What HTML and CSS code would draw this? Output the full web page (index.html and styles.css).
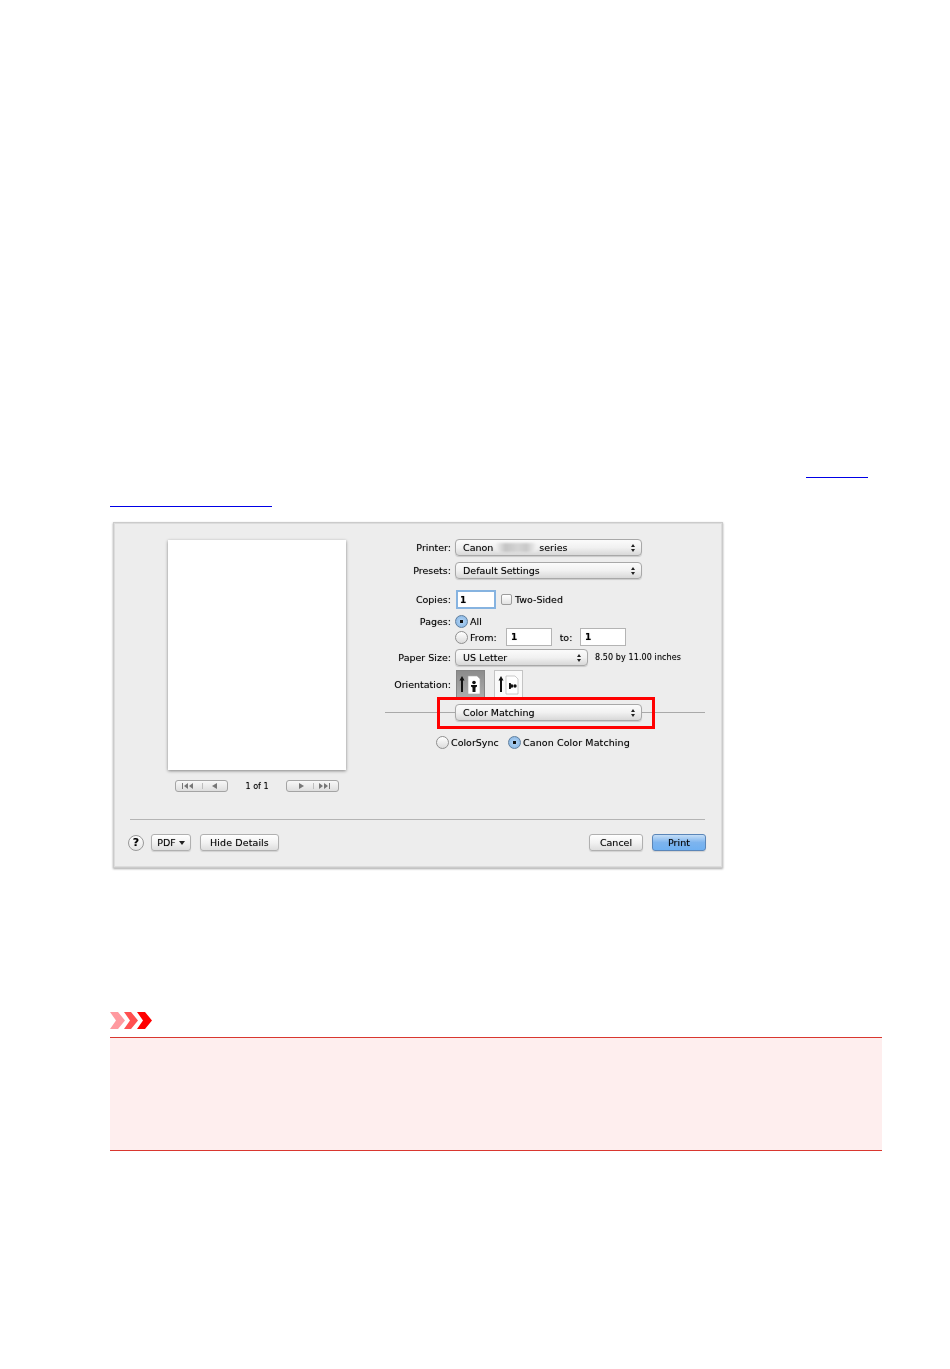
FILE: index.html
```html
<!DOCTYPE html>
<html lang="en">
<head>
<meta charset="utf-8">
<title>Color Matching</title>
<link rel="stylesheet" href="styles.css">
</head>
<body>
<main class="page">
  <div class="link-line link-line-first"></div>
  <div class="link-line link-line-second"></div>

  <section class="dialog">
    <div class="dialog-top">
      <div class="preview-col">
        <div class="sheet"></div>
        <div class="pager">
          <div class="seg-btn">
            <svg width="51" height="10" viewBox="0 0 51 10"><path class="glyph" d="M6 2h1v6H6zM12 2v6L8 5zM17 2v6l-4-3z"/><path class="sep" d="M26.500 2v6"/><path class="glyph" d="M41 2v6l-5-3z"/></svg>
          </div>
          <span class="pager-text">1 of 1</span>
          <div class="seg-btn">
            <svg width="51" height="10" viewBox="0 0 51 10"><path class="glyph" d="M12 2v6l5-3z"/><path class="sep" d="M26.500 2v6"/><path class="glyph" d="M32 2v6l4-3zM37 2v6l4-3zM42 2h1v6h-1z"/></svg>
          </div>
        </div>
      </div>

      <div class="form-col">
        <div class="row row-printer">
          <span class="label">Printer:</span>
          <div class="popup popup-wide">
            <span>Canon</span><span class="smudge"></span><span>series</span>
            <svg class="stepper" width="6" height="10" viewBox="0 0 6 10"><path d="M3 1l2 3H1zM3 9L1 6h4z"/></svg>
          </div>
        </div>
        <div class="row row-presets">
          <span class="label">Presets:</span>
          <div class="popup popup-wide">
            <span>Default Settings</span>
            <svg class="stepper" width="6" height="10" viewBox="0 0 6 10"><path d="M3 1l2 3H1zM3 9L1 6h4z"/></svg>
          </div>
        </div>
        <div class="row row-copies">
          <span class="label">Copies:</span>
          <div class="field field-focus">1</div>
          <span class="check"></span>
          <span>Two-Sided</span>
        </div>
        <div class="row row-pages">
          <span class="label">Pages:</span>
          <span class="radio radio-on"></span>
          <span>All</span>
        </div>
        <div class="row row-from">
          <span class="label"></span>
          <span class="radio"></span>
          <span class="from-label">From:</span>
          <div class="field field-range">1</div>
          <span class="to-label">to:</span>
          <div class="field field-range">1</div>
        </div>
        <div class="row row-paper">
          <span class="label">Paper Size:</span>
          <div class="popup popup-paper">
            <span>US Letter</span>
            <svg class="stepper" width="6" height="10" viewBox="0 0 6 10"><path d="M3 1l2 3H1zM3 9L1 6h4z"/></svg>
          </div>
          <span class="paper-note">8.50 by 11.00 inches</span>
        </div>
        <div class="row row-orient">
          <span class="label">Orientation:</span>
          <div class="orient orient-on">
            <svg width="27" height="27" viewBox="0 0 27 27"><path class="ink" d="M5 5l2.500 4.500H6V21H4V9.500H2.500z"/><path class="page-shape" d="M11 5h9l3 3v15H11z"/><circle class="ink" cx="17" cy="11.500" r="1.800"/><path class="ink" d="M14 14h6v1.500l-1.500 1V21h-3v-4.500l-1.500-1z"/></svg>
          </div>
          <div class="orient">
            <svg width="27" height="27" viewBox="0 0 27 27"><path class="ink" d="M6 5l2.500 4.500H7V21H5V9.500H3.500z"/><path class="page-shape" d="M11 5h9l3 3v15H11z"/><circle class="ink" cx="20" cy="15" r="1.700"/><path class="ink" d="M14 12h1.500l1 1.500H18v3h-1.500l-1 1.500H14z"/></svg>
          </div>
        </div>
        <div class="row row-pane">
          <div class="pane-line"></div>
          <div class="popup popup-wide popup-pane">
            <span>Color Matching</span>
            <svg class="stepper" width="6" height="10" viewBox="0 0 6 10"><path d="M3 1l2 3H1zM3 9L1 6h4z"/></svg>
          </div>
          <div class="highlight"></div>
        </div>
        <div class="row row-match">
          <span class="radio"></span>
          <span class="sync-label">ColorSync</span>
          <span class="radio radio-on"></span>
          <span class="match-label">Canon Color Matching</span>
        </div>
      </div>
    </div>

    <div class="dialog-rule"></div>

    <div class="footer">
      <span class="help">?</span>
      <div class="btn btn-pdf">PDF <span class="caret"></span></div>
      <div class="btn btn-details">Hide Details</div>
      <div class="btn btn-cancel">Cancel</div>
      <div class="btn btn-print">Print</div>
    </div>
  </section>

  <svg class="alert-icon" width="42" height="17" viewBox="0 0 42 17">
    <path class="chev-1" d="M0 0h8l7 8.500L8 17H0l6-8.500z"/>
    <path class="chev-2" d="M14 0h7l7 8.500L21 17h-7l6-8.500z"/>
    <path class="chev-3" d="M27 0h8l7 8.500L35 17h-8l6-8.500z"/>
  </svg>
  <div class="alert-box"></div>
</main>
</body>
</html>
```

FILE: styles.css
```css
html, body {
  margin: 0;
  background: #fff;
}

.page {
  box-sizing: border-box;
  width: 772px;
  height: 1369px;
  margin-left: 110px;
  padding-top: 477px;
  overflow: hidden;
  font-family: "DejaVu Sans", sans-serif;
}

.link-line {
  height: 1px;
  background: #0000e6;
}

.link-line-first {
  width: 62px;
  margin-left: 696px;
}

.link-line-second {
  width: 162px;
  margin-top: 28px;
}

.dialog {
  box-sizing: border-box;
  width: 608px;
  height: 344px;
  margin: 16px 0 0 4px;
  background: #ededed;
  box-shadow: inset 0 0 0 1px #dcdcdc, 0 0 0 1px #cbcbcb, 0 1px 2px 1px rgba(0, 0, 0, .35);
  color: #000;
  font-size: 9.5px;
  text-shadow: 0 0 1px rgba(0, 0, 0, .35);
  filter: blur(.35px);
}

.dialog-top {
  display: flex;
  height: 296px;
}

.preview-col {
  width: 178px;
  margin-left: 54px;
  padding-top: 17px;
}

.sheet {
  height: 230px;
  background: #fff;
  box-shadow: 0 1px 3px rgba(0, 0, 0, .45);
}

.pager {
  display: flex;
  align-items: center;
  justify-content: center;
  margin-top: 10px;
  gap: 17px;
  font-size: 8px;
}

.pager-text {
  width: 24px;
  text-align: center;
  white-space: nowrap;
}

.seg-btn {
  display: flex;
  box-sizing: border-box;
  width: 53px;
  height: 12px;
  align-items: center;
  justify-content: center;
  border: 1px solid #a4a4a4;
  border-radius: 3px;
  background: linear-gradient(#f8f8f8, #dedede);
}

.glyph {
  fill: #777;
}

.sep {
  stroke: #bdbdbd;
  fill: none;
}

.form-col {
  width: 320px;
  margin-left: 39px;
  padding-top: 16px;
}

.row {
  display: flex;
  align-items: center;
  white-space: nowrap;
}

.label {
  flex: none;
  width: 66px;
  margin-right: 4px;
  text-align: right;
}

.row-printer { height: 17px; }
.row-presets { height: 17px; margin-top: 6px; }
.row-copies { height: 20px; margin-top: 10px; }
.row-pages { height: 14px; margin-top: 5px; }
.row-from { height: 18px; margin-top: 0; }
.row-paper { height: 17px; margin-top: 3px; }
.row-orient { height: 29px; margin-top: 4px; }

.popup {
  display: flex;
  box-sizing: border-box;
  height: 100%;
  align-items: center;
  padding: 0 5px 0 7px;
  border: 1px solid #a8a8a8;
  border-radius: 4px;
  background: linear-gradient(#fbfbfb, #f1f1f1 50%, #d8d8d8);
  box-shadow: 0 1px 1px rgba(0, 0, 0, .15);
}

.popup-wide { width: 187px; }
.popup-paper { width: 133px; }

.stepper {
  flex: none;
  margin-left: auto;
  fill: #222;
}

.smudge {
  width: 42px;
  height: 9px;
  margin: 0 2px;
  border-radius: 4px;
  background: linear-gradient(90deg, #f4f4f4, #c4c4c4 25%, #d4d4d4 55%, #c8c8c8 75%, #f4f4f4);
  filter: blur(1px);
}

.field {
  box-sizing: border-box;
  background: #fff;
  border: 1px solid #b4b4b4;
  padding-left: 4px;
  font-weight: 700;
  font-size: 9px;
  line-height: 17px;
}

.field-focus {
  width: 40px;
  height: 19px;
  border: 2px solid #86b3e0;
  padding-left: 2px;
  margin-left: 1px;
  line-height: 16px;
}

.field-range {
  width: 46px;
  height: 18px;
}

.check {
  box-sizing: border-box;
  width: 11px;
  height: 11px;
  margin: 0 3px 0 5px;
  border: 1px solid #9c9c9c;
  border-radius: 2px;
  background: linear-gradient(#fff, #e2e2e2);
}

.radio {
  flex: none;
  box-sizing: border-box;
  width: 13px;
  height: 13px;
  margin-right: 2px;
  border: 1px solid #8f8f8f;
  border-radius: 50%;
  background: linear-gradient(#fff, #dcdcdc);
}

.radio-on {
  border-color: #5f7f9f;
  background: radial-gradient(circle, #111 0 1.500px, #a9cdf0 2px, #7fb0e0);
}

.from-label { width: 36px; }
.to-label { width: 28px; text-align: center; }

.paper-note {
  margin-left: 7px;
  font-size: 8px;
  letter-spacing: .1px;
}

.match-label {
  letter-spacing: .1px;
}

.orient {
  display: flex;
  box-sizing: border-box;
  width: 29px;
  height: 29px;
  align-items: center;
  justify-content: center;
  margin-right: 9px;
  border: 1px solid #c4c4c4;
  background: #fafafa;
}

.orient-on {
  margin-left: 1px;
  border-color: #858585;
  background: linear-gradient(#8c8c8c, #adadad);
}

.ink { fill: #111; }
.page-shape { fill: #fff; stroke: #aaa; stroke-width: .6; }

.row-pane {
  position: relative;
  height: 17px;
  margin-top: 5px;
  padding-left: 70px;
}

.pane-line {
  position: absolute;
  left: 0;
  right: 0;
  top: 8px;
  height: 1px;
  background: #a9a9a9;
}

.popup-pane {
  position: relative;
}

.highlight {
  position: absolute;
  left: 52px;
  top: -7px;
  box-sizing: border-box;
  width: 218px;
  height: 32px;
  border: 3px solid #f00;
}

.row-match {
  height: 14px;
  margin-top: 14px;
  padding-left: 51px;
}

.sync-label { width: 57px; }

.dialog-rule {
  height: 1px;
  margin: 0 17px 0 16px;
  background: #b4b4b4;
}

.footer {
  display: flex;
  align-items: center;
  height: 17px;
  margin-top: 14px;
  padding: 0 16px 0 14px;
}

.help {
  box-sizing: border-box;
  width: 16px;
  height: 16px;
  margin-right: 7px;
  border: 1px solid #999;
  border-radius: 50%;
  background: linear-gradient(#fff, #e4e4e4);
  font-size: 11px;
  line-height: 14px;
  text-align: center;
  font-weight: 700;
}

.btn {
  display: flex;
  box-sizing: border-box;
  height: 17px;
  align-items: center;
  justify-content: center;
  border: 1px solid #b0b0b0;
  border-radius: 3px;
  background: linear-gradient(#fff, #f2f2f2 50%, #dedede);
  box-shadow: 0 1px 1px rgba(0, 0, 0, .12);
}

.btn-pdf { width: 40px; margin-right: 9px; gap: 3px; }
.btn-details { width: 79px; letter-spacing: .1px; }
.btn-cancel { width: 54px; margin-left: auto; margin-right: 9px; }

.btn-print {
  width: 54px;
  border-color: #5b86b8;
  background: linear-gradient(#c5def7, #7db4ee 50%, #6fb0f2);
}

.caret {
  width: 0;
  height: 0;
  border: 3px solid transparent;
  border-top: 4px solid #222;
  border-bottom: 0;
}

.alert-icon {
  display: block;
  margin-top: 145px;
}

.chev-1 { fill: #ff9aa0; }
.chev-2 { fill: #ff5050; }
.chev-3 { fill: #f00; }

.alert-box {
  box-sizing: border-box;
  height: 114px;
  margin-top: 8px;
  background: #feeeee;
  border-top: 1px solid #d9372f;
  border-bottom: 1px solid #d9372f;
}
```
